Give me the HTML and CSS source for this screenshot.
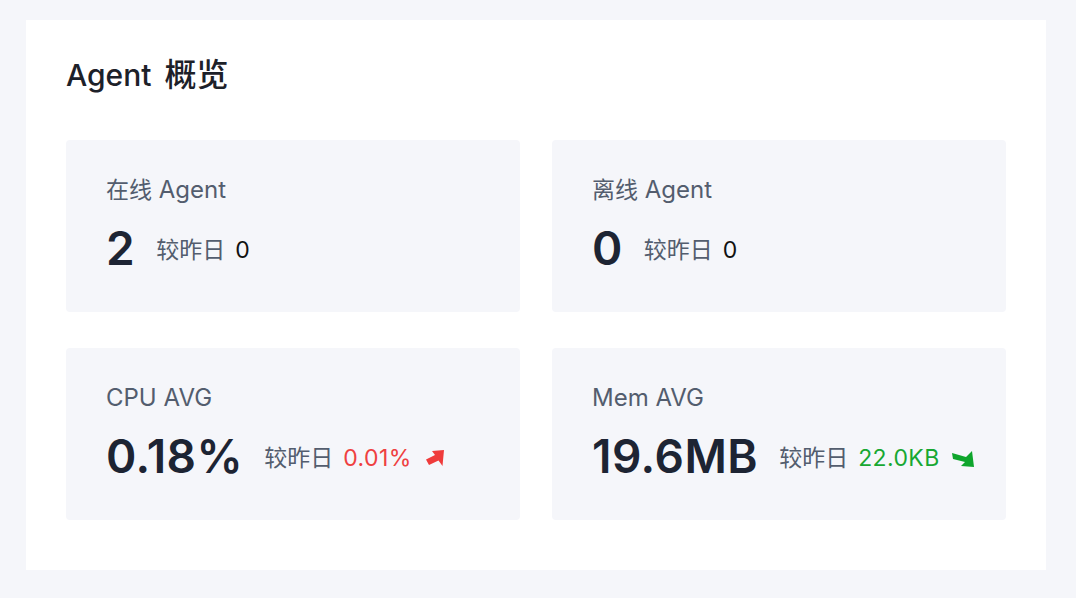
FILE: index.html
```html
<!DOCTYPE html>
<html lang="zh-CN">
<head>
<meta charset="utf-8">
<link rel="stylesheet" href="styles.css">
</head>
<body>
<section class="panel">
  <h1 class="title">Agent<span class="zh">概览</span></h1>
  <div class="grid">
    <div class="card">
      <div class="label"><span class="zh">在线</span> Agent</div>
      <div class="row">
        <span class="num">2</span>
        <span class="cmp"><span class="zh">较昨日</span><span class="val">0</span></span>
      </div>
    </div>
    <div class="card">
      <div class="label"><span class="zh">离线</span> Agent</div>
      <div class="row">
        <span class="num">0</span>
        <span class="cmp"><span class="zh">较昨日</span><span class="val">0</span></span>
      </div>
    </div>
    <div class="card">
      <div class="label">CPU AVG</div>
      <div class="row">
        <span class="num">0.18%</span>
        <span class="cmp"><span class="zh">较昨日</span><span class="val up">0.01%</span><svg class="arrow" width="18" height="17" viewBox="0 0 18 17"><polygon fill="#ef3b3b" points="18,0 16.5,16 12.5,10.5 3,15 0,9.5 9,5 6,1"/></svg></span>
      </div>
    </div>
    <div class="card">
      <div class="label">Mem AVG</div>
      <div class="row">
        <span class="num">19.6MB</span>
        <span class="cmp"><span class="zh">较昨日</span><span class="val down">22.0KB</span><svg class="arrow arrow-down" width="22" height="16" viewBox="0 0 22 16"><polygon fill="#0ea52c" points="22,16 9,15 13,11 1,8 0,2 14,6 20,0"/></svg></span>
      </div>
    </div>
  </div>
</section>
</body>
</html>
```

FILE: styles.css
```css
html, body {
  margin: 0;
  padding: 0;
  background: #f5f6fa;
}
body {
  font-family: Inter, "Noto Sans CJK SC", sans-serif;
  padding: 20px 30px 28px 26px;
}
.zh {
  font-family: "Noto Sans CJK SC", sans-serif;
  line-height: 1;
}
.panel {
  background: #ffffff;
  width: 1020px;
  box-sizing: border-box;
  padding: 35px 40px 50px 40px;
}
.title {
  margin: 0 0 45px 0;
  font-size: 30px;
  line-height: 40px;
  font-weight: 500;
  color: #1d2129;
}
.title .zh {
  font-size: 32px;
  margin-left: 13px;
}
.grid {
  display: grid;
  grid-template-columns: 454px 454px;
  column-gap: 32px;
  row-gap: 36px;
}
.card {
  background: #f5f6fa;
  border-radius: 4px;
  height: 172px;
  box-sizing: border-box;
  padding: 36px 40px 0 40px;
}
.label {
  font-size: 24px;
  line-height: 28px;
  color: #535d6e;
}
.label .zh {
  font-size: 23px;
}
.row {
  margin-top: 16px;
  display: flex;
  align-items: center;
  height: 56px;
}
.num {
  font-size: 46px;
  line-height: 56px;
  font-weight: 600;
  color: #1d2433;
  letter-spacing: 0.5px;
  margin-right: 21px;
}
.cmp {
  display: block;
  font-size: 22px;
  line-height: 28px;
  color: #535d6e;
  padding-top: 4px;
  white-space: nowrap;
}
.cmp .zh {
  font-size: 23px;
}
.val {
  color: #111;
  font-size: 23px;
  letter-spacing: 0.4px;
  margin-left: 10px;
}
.val.up { color: #ef4040; }
.val.down { color: #17a832; }
.arrow {
  margin-left: 14px;
  vertical-align: -1px;
}
.arrow-down {
  margin-left: 12px;
}
```
